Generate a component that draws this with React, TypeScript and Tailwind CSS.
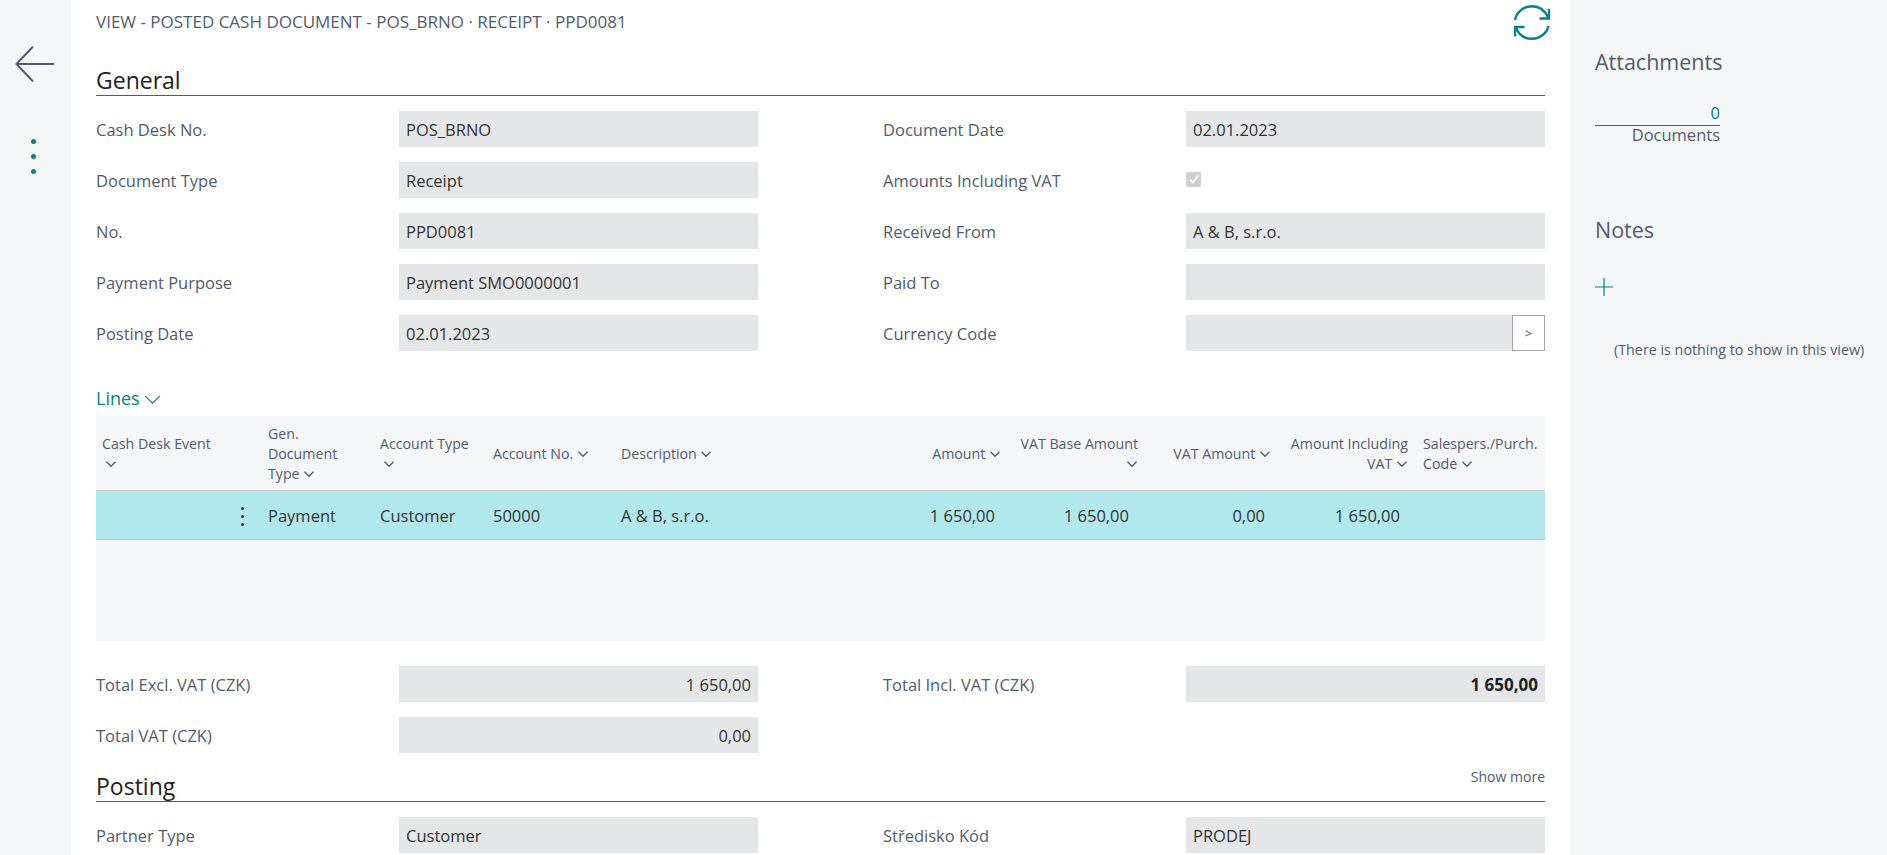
const FONT = "font-['Open_Sans',sans-serif]";

function Chevron({ className = "w-3 h-3" }: { className?: string }) {
  return (
    <svg viewBox="0 0 12 12" className={`inline-block align-[-1px] ${className}`} fill="none" stroke="currentColor" strokeWidth="1.3">
      <path d="M1.5 3.8 6 8.3l4.5-4.5" />
    </svg>
  );
}

function Field({ label, value, align, bold }: { label: string; value?: string; align?: "right"; bold?: boolean }) {
  return (
    <div className="flex h-9 items-center">
      <div className="w-[303px] shrink-0 pt-[2px] text-[#505c6d]">{label}</div>
      <div className={`flex h-9 flex-1 items-center bg-[#e5e6e8] px-[7px] pt-[2px] text-[#333] ${align === "right" ? "justify-end" : ""} ${bold ? "text-[17px] font-bold text-[#212121]" : ""}`}>
        {value}
      </div>
    </div>
  );
}

function Section({ title, aside }: { title: string; aside?: string }) {
  return (
    <div className="flex h-[30px] items-end justify-between border-b border-[#505c6d]">
      <div className="text-[23px] leading-[30px] text-[#212121]">{title}</div>
      {aside && <div className="mb-[14px] text-sm text-[#505c6d]">{aside}</div>}
    </div>
  );
}

const gridCols = "grid grid-cols-[166px_112px_113px_128px_260px_132px_137px_133px_137px_131px]";

export default function App() {
  return (
    <div className={`flex h-[855px] overflow-hidden bg-[#f5f6f8] text-[16.5px] ${FONT}`}>
      <aside className="flex w-[71px] shrink-0 flex-col items-center pt-[46px]">
        <svg viewBox="0 0 40 36" className="mr-[2px] h-9 w-10" fill="none" stroke="#505c6d" strokeWidth="2">
          <path d="M39 18H1.5M18 .5 1.5 18 18 35.5" />
        </svg>
        <div className="mt-[57px] -ml-[4px] flex flex-col gap-[10px]">
          <div className="h-[5px] w-[5px] rounded-full bg-[#00838a]" />
          <div className="h-[5px] w-[5px] rounded-full bg-[#00838a]" />
          <div className="h-[5px] w-[5px] rounded-full bg-[#00838a]" />
        </div>
      </aside>

      <main className="w-[1499px] shrink-0 bg-white px-[25px]">
        <div className="flex h-[44px] items-center justify-between">
          <div className="text-[17px] text-[#505c6d]">VIEW - POSTED CASH DOCUMENT - POS_BRNO · RECEIPT · PPD0081</div>
          <svg viewBox="0 0 36 36" className="-mr-[5px] mt-[2px] h-9 w-9" fill="none" stroke="#00838a" strokeWidth="2.4">
            <path d="M1 15C2.5 7 9.5 1.2 18 1.2c7 0 13 4 16.3 11.5" />
            <path d="M35 4v9.5h-9.5" />
            <path d="M34.5 21C33 28 26 33.8 18 33.8 11 33.8 5 30 2 23" />
            <path d="M1 31.5v-9.5h9.5" />
          </svg>
        </div>

        <div className="mt-[22px]">
          <Section title="General" />
        </div>
        <div className="mt-[15px] grid grid-cols-[662px_662px] gap-x-[125px] gap-y-[15px]">
          <Field label="Cash Desk No." value="POS_BRNO" />
          <Field label="Document Date" value="02.01.2023" />
          <Field label="Document Type" value="Receipt" />
          <div className="flex h-9 items-center">
            <div className="w-[303px] shrink-0 pt-[2px] text-[#505c6d]">Amounts Including VAT</div>
            <div className="mb-[2px] flex h-[15px] w-[15px] items-center justify-center rounded-[2px] bg-[#cfcfcf]">
              <svg viewBox="0 0 12 12" className="h-3 w-3" fill="none" stroke="#fff" strokeWidth="1.8">
                <path d="M2 6.5 5 9.5 10 2.5" />
              </svg>
            </div>
          </div>
          <Field label="No." value="PPD0081" />
          <Field label="Received From" value="A & B, s.r.o." />
          <Field label="Payment Purpose" value="Payment SMO0000001" />
          <Field label="Paid To" />
          <Field label="Posting Date" value="02.01.2023" />
          <div className="relative">
            <Field label="Currency Code" />
            <button className="absolute right-0 top-0 flex h-9 w-[33px] items-center justify-center border border-[#a6a6a6] bg-white pt-[2px] text-[13px] text-[#505c6d]">
              &gt;
            </button>
          </div>
        </div>

        <div className="mt-[33px] flex h-[28px] items-center text-[#00838a]">
          <span className="text-[18px]">Lines</span>
          <svg viewBox="0 0 16 16" className="ml-[4px] mt-[2px] h-[17px] w-[17px]" fill="none" stroke="currentColor" strokeWidth="1">
            <path d="M1 4.5 8 11.5l7-7" />
          </svg>
        </div>

        <div className="mt-[4px] h-[225px] bg-[#f5f6f8]">
          <div className={`${gridCols} h-[75px] items-center border-b border-[#d0d2d6] pt-[2px] text-[14.2px] leading-5 text-[#505c6d]`}>
            <div className="px-[6px]">Cash Desk Event<br /><Chevron className="ml-[3px] h-3 w-3" /></div>
            <div className="px-[6px]">Gen.<br />Document<br />Type <Chevron /></div>
            <div className="px-[6px]">Account Type<br /><Chevron className="ml-[3px] h-3 w-3" /></div>
            <div className="px-[6px]">Account No. <Chevron /></div>
            <div className="px-[6px]">Description <Chevron /></div>
            <div className="px-[6px] text-right">Amount <Chevron /></div>
            <div className="px-[6px] text-right">VAT Base Amount<br /><Chevron /></div>
            <div className="px-[6px] text-right">VAT Amount <Chevron /></div>
            <div className="px-[6px] text-right">Amount Including<br />VAT <Chevron /></div>
            <div className="whitespace-nowrap pl-[9px]">Salespers./Purch.<br />Code <Chevron /></div>
          </div>
          <div className={`${gridCols} h-[49px] items-center border-b border-[#c8cace] bg-[#b1e8eb] pt-[2px] text-[#333]`}>
            <div className="flex justify-end pr-[18px]">
              <div className="flex flex-col gap-[5px]">
                <div className="h-[3px] w-[3px] rounded-full bg-[#333]" />
                <div className="h-[3px] w-[3px] rounded-full bg-[#333]" />
                <div className="h-[3px] w-[3px] rounded-full bg-[#333]" />
              </div>
            </div>
            <div className="px-[6px]">Payment</div>
            <div className="px-[6px]">Customer</div>
            <div className="px-[6px]">50000</div>
            <div className="px-[6px]">A &amp; B, s.r.o.</div>
            <div className="pr-[12px] text-right">1 650,00</div>
            <div className="pr-[15px] text-right">1 650,00</div>
            <div className="pr-[12px] text-right">0,00</div>
            <div className="pr-[14px] text-right">1 650,00</div>
            <div />
          </div>
        </div>

        <div className="mt-[25px] grid grid-cols-[662px_662px] gap-x-[125px] gap-y-[15px]">
          <Field label="Total Excl. VAT (CZK)" value="1 650,00" align="right" />
          <Field label="Total Incl. VAT (CZK)" value="1 650,00" align="right" bold />
          <Field label="Total VAT (CZK)" value="0,00" align="right" />
        </div>

        <div className="mt-[19px]">
          <Section title="Posting" aside="Show more" />
        </div>
        <div className="mt-[15px] grid grid-cols-[662px_662px] gap-x-[125px]">
          <Field label="Partner Type" value="Customer" />
          <Field label="Středisko Kód" value="PRODEJ" />
        </div>
      </main>

      <aside className="flex-1 pl-[25px] pt-[47px] text-[#505c6d]">
        <div className="text-[21.5px] leading-[30px]">Attachments</div>
        <div className="mt-[24px] w-[125px] text-right">
          <div className="border-b border-[#505c6d] leading-[24px] text-[#00838a]">0</div>
          <div className="-mt-[1px] leading-[20px]">Documents</div>
        </div>
        <div className="mt-[70px] text-[21.5px] leading-[30px]">Notes</div>
        <svg viewBox="0 0 18 18" className="mt-[33px] h-[18px] w-[18px]" fill="none" stroke="#00838a" strokeWidth="1.2">
          <path d="M9 0v18M0 9h18" />
        </svg>
        <div className="mt-[44px] whitespace-nowrap pl-[19px] text-[14.3px] leading-5">(There is nothing to show in this view)</div>
      </aside>
    </div>
  );
}
